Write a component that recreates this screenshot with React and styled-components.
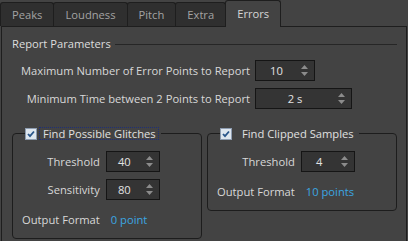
import styled, { createGlobalStyle } from "styled-components";

const GlobalStyle = createGlobalStyle`
  body {
    margin: 0;
    background: #434343;
    font-family: "Open Sans", "Noto Sans", sans-serif;
    font-size: 11.2px;
    color: #d8d8d8;
  }
`;

const tabs = ["Peaks", "Loudness", "Pitch", "Extra", "Errors"];

const Window = styled.div`
  width: 408px;
  height: 241px;
  overflow: hidden;
  background: #434343;
`;

const TabBar = styled.div`
  display: flex;
  align-items: flex-end;
  height: 26px;
`;

const Tab = styled.div`
  position: relative;
  box-sizing: border-box;
  height: ${(p) => (p.$active ? "27px" : "24px")};
  margin-bottom: ${(p) => (p.$active ? "-1px" : "0")};
  margin-left: -1px;
  padding: 0 11px;
  padding-bottom: ${(p) => (p.$active ? "1px" : "0")};
  display: flex;
  align-items: center;
  background: ${(p) => (p.$active ? "#434343" : "#2f2f2f")};
  color: ${(p) => (p.$active ? "#d6d6d6" : "#a3a3a3")};
  border: 1px solid #1e1e1e;
  border-bottom: none;
  border-radius: 3px 3px 0 0;
  z-index: ${(p) => (p.$active ? 1 : 0)};
  &:first-child {
    margin-left: 0;
  }
`;

const Panel = styled.div`
  box-sizing: border-box;
  height: 215px;
  margin: 0 1px;
  border: 1px solid #1e1e1e;
  border-bottom: none;
  padding: 10px 9px 0 10px;
`;

const Title = styled.div`
  display: flex;
  align-items: center;
  line-height: 14px;
  color: #dedede;
  &::after {
    content: "";
    flex: 1;
    height: 1px;
    margin: 0 0 0 4px;
    background: #262626;
  }
`;

const ParamGrid = styled.div`
  display: grid;
  grid-template-columns: auto auto;
  justify-content: start;
  column-gap: 5px;
  row-gap: 7px;
  margin-top: 9px;
  padding-left: 9px;
`;

const Label = styled.span`
  justify-self: end;
  align-self: center;
  white-space: nowrap;
`;

const Spin = styled.div`
  box-sizing: border-box;
  width: ${(p) => p.$w}px;
  height: 21px;
  display: flex;
  align-items: center;
  background: #343434;
  border: 1px solid #151515;
  color: #e2e2e2;
`;

const SpinValue = styled.span`
  flex: 1;
  text-align: center;
`;

const Arrows = styled.svg`
  width: 7px;
  height: 11px;
  margin: 0 6px 0 4px;
  flex: none;
`;

const SpinBox = ({ value, width }) => (
  <Spin $w={width}>
    <SpinValue>{value}</SpinValue>
    <Arrows viewBox="0 0 7 11">
      <path d="M3.5 0 L7 4 L0 4 Z" fill="#8c8c8c" />
      <path d="M0 7 L7 7 L3.5 11 Z" fill="#8c8c8c" />
    </Arrows>
  </Spin>
);

const Groups = styled.div`
  display: grid;
  grid-template-columns: 190px 190px;
  column-gap: 5px;
  align-items: start;
  margin-top: 18px;
`;

const Group = styled.fieldset`
  margin: 0;
  padding: 11px 0 8px 9px;
  border: 1px solid #1d1d1d;
  border-radius: 4px;
  min-width: 0;
`;

const Legend = styled.legend`
  display: flex;
  align-items: center;
  margin-left: 3px;
  padding: 0 2px 0 0;
  height: 13px;
`;

const Box = styled.span`
  box-sizing: border-box;
  width: 12px;
  height: 12px;
  background: #dde6ef;
  border: 1px solid #8d9cb0;
  display: flex;
  align-items: center;
  justify-content: center;
`;

const LegendText = styled.span`
  margin-left: ${(p) => (p.$focus ? "2px" : "6px")};
  padding: 0 2px 0 3px;
  line-height: 11px;
  border: 1px ${(p) => (p.$focus ? "dotted #1d2f78" : "solid transparent")};
  color: #e0e0e0;
  white-space: nowrap;
`;

const Check = () => (
  <svg width="8" height="8" viewBox="0 0 8 8">
    <path d="M1 4 L3 6.2 L7 1.5" stroke="#28558a" strokeWidth="1.8" fill="none" />
  </svg>
);

const GroupGrid = styled.div`
  display: grid;
  grid-template-columns: auto auto;
  justify-content: start;
  column-gap: 6px;
  row-gap: 7px;
`;

const Output = styled.span`
  padding-left: 5px;
  align-self: center;
  color: #3ba6e2;
`;

const OutLabel = styled(Label)`
  margin-top: 2px;
`;

const OutValue = styled(Output)`
  margin-top: 2px;
  line-height: 21px;
`;

export default function App() {
  return (
    <Window>
      <GlobalStyle />
      <TabBar>
        {tabs.map((t) => (
          <Tab key={t} $active={t === "Errors"}>
            {t}
          </Tab>
        ))}
      </TabBar>
      <Panel>
        <Title>Report Parameters</Title>
        <ParamGrid>
          <Label>Maximum Number of Error Points to Report</Label>
          <SpinBox value="10" width={60} />
          <Label>Minimum Time between 2 Points to Report</Label>
          <SpinBox value="2 s" width={97} />
        </ParamGrid>
        <Groups>
          <Group>
            <Legend>
              <Box>
                <Check />
              </Box>
              <LegendText $focus>Find Possible Glitches</LegendText>
            </Legend>
            <GroupGrid>
              <Label>Threshold</Label>
              <SpinBox value="40" width={54} />
              <Label>Sensitivity</Label>
              <SpinBox value="80" width={54} />
              <OutLabel>Output Format</OutLabel>
              <OutValue>0 point</OutValue>
            </GroupGrid>
          </Group>
          <Group>
            <Legend>
              <Box>
                <Check />
              </Box>
              <LegendText>Find Clipped Samples</LegendText>
            </Legend>
            <GroupGrid>
              <Label>Threshold</Label>
              <SpinBox value="4" width={54} />
              <OutLabel>Output Format</OutLabel>
              <OutValue>10 points</OutValue>
            </GroupGrid>
          </Group>
        </Groups>
      </Panel>
    </Window>
  );
}
